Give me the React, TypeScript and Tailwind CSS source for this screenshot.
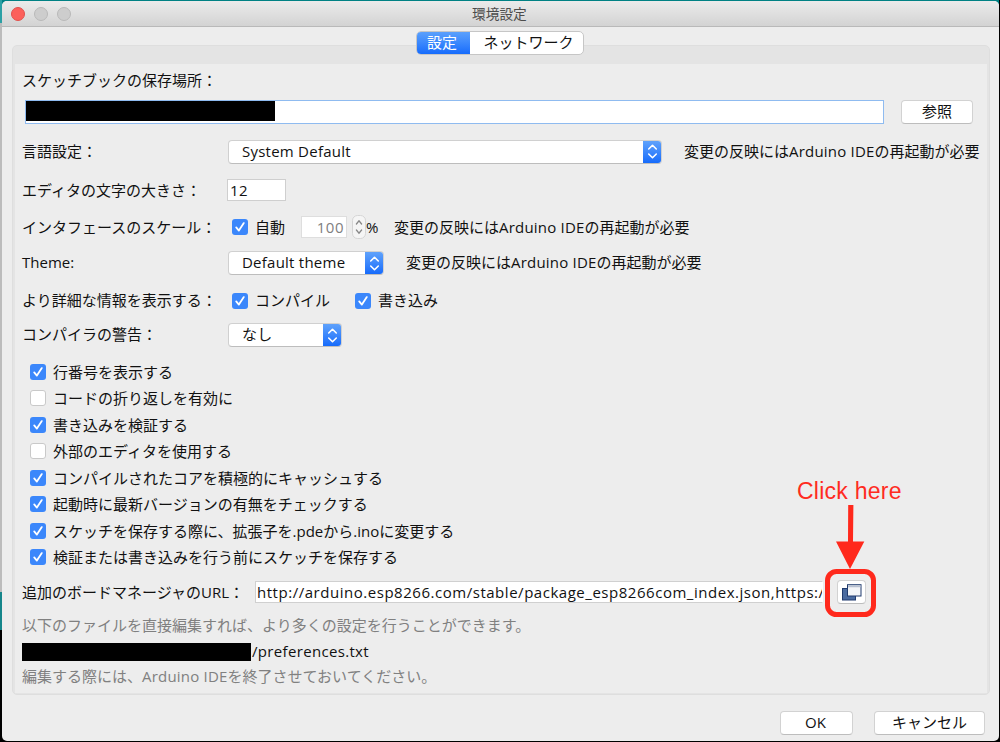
import React from "react";

const NOTE = "変更の反映にはArduino IDEの再起動が必要";

function Text({ children, className = "" }: { children: React.ReactNode; className?: string }) {
  return <span className={`shrink-0 whitespace-nowrap leading-5 ${className}`}>{children}</span>;
}

function Row({ children, className }: { children: React.ReactNode; className: string }) {
  return <div className={`flex shrink-0 items-center ${className}`}>{children}</div>;
}

function Note({ className }: { className: string }) {
  return (
    <Text className={className}>
      {NOTE.slice(0, 7)}
      <span className="tracking-[0.2px]">{NOTE.slice(7, 18)}</span>
      {NOTE.slice(18)}
    </Text>
  );
}

function Check({ on }: { on: boolean }) {
  return on ? (
    <svg className="h-4 w-4 shrink-0" viewBox="0 0 16 16">
      <rect width="16" height="16" rx="3" fill="#3b87fb" />
      <path d="M4.2 8.4 6.9 11.6 11.8 4.1" fill="none" stroke="white" strokeWidth="1.8" strokeLinecap="round" strokeLinejoin="round" />
    </svg>
  ) : (
    <span className="h-4 w-4 shrink-0 rounded-[3px] border border-[#c9c9c9] bg-white" />
  );
}

function Select({ label, className }: { label: string; className: string }) {
  return (
    <div className={`flex h-6 shrink-0 overflow-hidden rounded border border-[#d0d0d0] border-b-[#bdbdbd] bg-white ${className}`}>
      <div className="flex flex-1 items-center pl-[13px]">
        <Text className="mb-[2px] tracking-[0.24px]">{label}</Text>
      </div>
      <div className="-my-px -mr-px flex w-[19px] items-center justify-center bg-linear-to-b from-[#62a4fb] to-[#1068fb]">
        <svg width="11" height="17" viewBox="0 0 11 17" fill="none" stroke="white" strokeWidth="1.6" strokeLinecap="round" strokeLinejoin="round">
          <path d="M1.7 6 5.5 2.3 9.3 6M1.7 11 5.5 14.7 9.3 11" />
        </svg>
      </div>
    </div>
  );
}

function Button({ children, className }: { children: React.ReactNode; className: string }) {
  return (
    <button className={`flex h-6 shrink-0 items-center justify-center rounded border border-[#d2d2d2] border-b-[#bdbdbd] bg-white ${className}`}>
      {children}
    </button>
  );
}

const OPTIONS: [string, boolean][] = [
  ["行番号を表示する", true],
  ["コードの折り返しを有効に", false],
  ["書き込みを検証する", true],
  ["外部のエディタを使用する", false],
  ["コンパイルされたコアを積極的にキャッシュする", true],
  ["起動時に最新バージョンの有無をチェックする", true],
  ["スケッチを保存する際に、拡張子を.pdeから.inoに変更する", true],
  ["検証または書き込みを行う前にスケッチを保存する", true],
];

export default function App() {
  return (
    <div className="relative flex h-[742px] w-[1000px] overflow-hidden bg-black font-['Open_Sans','Noto_Sans_CJK_JP',sans-serif] text-[15px] text-[#111]">
      <div className="flex w-[2px] shrink-0 flex-col">
        <div className="h-[23px] bg-[#2ba0a5]" />
        <div className="h-[569px] bg-[#bcbcbc]" />
        <div className="h-[38px] bg-[#16868b]" />
      </div>
      <div className="flex h-[741px] w-[997px] shrink-0 flex-col bg-linear-to-b from-[#008184] from-50% to-black to-50%">
        <div className="mt-px flex h-[740px] flex-col overflow-hidden rounded-[5px] bg-[#ededed]">
          <header className="flex h-[26px] shrink-0 items-center border-b border-[#b9b9b9] bg-linear-to-b from-[#ebebeb] to-[#d3d3d3] pl-[9px]">
            <div className="flex gap-[9px]">
              <span className="h-[14px] w-[14px] rounded-full border border-[#e2504c] bg-[#fc605b]" />
              <span className="h-[14px] w-[14px] rounded-full border border-[#b9b9b9] bg-[#cdcdcd]" />
              <span className="h-[14px] w-[14px] rounded-full border border-[#b9b9b9] bg-[#cdcdcd]" />
            </div>
            <Text className="ml-[401px] text-[13.7px] text-[#4c4c4c]">環境設定</Text>
          </header>

          <div className="z-10 ml-[414px] mt-[4px] flex h-6 w-[168px] shrink-0 overflow-hidden rounded-[5px] border border-[#c6c6c6] bg-white">
            <div className="-my-px -ml-px flex w-[54px] items-center justify-center bg-linear-to-b from-[#5da2fc] to-[#1169fc] pr-[2px] text-white">
              <Text className="mb-[2px]">設定</Text>
            </div>
            <div className="flex flex-1 items-center justify-center pl-[4px]">
              <Text className="mb-[2px]">ネットワーク</Text>
            </div>
          </div>

          <main className="-mt-[10px] ml-[10px] flex h-[650px] w-[978px] shrink-0 flex-col rounded-[5px] border border-[#dedede] bg-[#e4e4e4] px-[2px] pb-[1px] pt-[18px]">
            <div className="flex flex-1 flex-col bg-[#ededed] pl-[7px]">
              <Row className="h-[32px]"><Text>スケッチブックの保存場所：</Text></Row>
              <Row className="h-[31px] pl-[3px]">
                <div className="h-[24px] w-[859px] border border-[#8fbbf0] bg-white">
                  <div className="h-[20px] w-[249px] bg-black" />
                </div>
                <Button className="ml-[17px] w-[72px]"><Text className="mb-[2px]">参照</Text></Button>
              </Row>
              <Row className="h-[49px]">
                <Text className="mb-[2px] w-[206px]">言語設定：</Text>
                <Select label="System Default" className="w-[434px]" />
                <Note className="mb-[2px] ml-[22px]" />
              </Row>
              <Row className="h-[28px]">
                <Text className="w-[205px]">エディタの文字の大きさ：</Text>
                <div className="flex h-[22px] w-[59px] items-center border border-[#cfcfcf] bg-white pl-[2px]"><Text className="mb-px tracking-[0.3px]">12</Text></div>
              </Row>
              <Row className="h-[46px]">
                <Text className="w-[210px]">インタフェースのスケール：</Text>
                <Check on />
                <Text className="ml-[7px] w-[46px]">自動</Text>
                <div className="flex h-[22px] w-[46px] items-center justify-end border border-[#dedede] bg-white pr-[2px] text-[#808080]"><Text className="mb-px tracking-[0.5px]">100</Text></div>
                <svg className="ml-[5px] shrink-0" width="14" height="24" viewBox="0 0 14 24" fill="none">
                  <rect x=".5" y=".5" width="13" height="23" rx="5" fill="#f5f5f5" stroke="#d5d5d5" />
                  <path d="M4.4 9 7 5.8 9.6 9M4.4 15 7 18.2 9.6 15" stroke="#888" strokeWidth="1.3" strokeLinecap="round" />
                </svg>
                <Text className="w-[28px]">%</Text>
                <Note className="" />
              </Row>
              <Row className="h-[26px]">
                <Text className="mb-[2px] w-[206px]">Theme:</Text>
                <Select label="Default theme" className="w-[156px]" />
                <Note className="mb-[2px] ml-[22px]" />
              </Row>
              <Row className="h-[49px]">
                <Text className="mb-[2px] w-[210px]">より詳細な情報を表示する：</Text>
                <Check on />
                <Text className="mb-[2px] ml-[7px] w-[100px]">コンパイル</Text>
                <Check on />
                <Text className="mb-[2px] ml-[7px]">書き込み</Text>
              </Row>
              <Row className="h-[20px]">
                <Text className="mb-[2px] w-[206px]">コンパイラの警告：</Text>
                <Select label="なし" className="w-[114px]" />
              </Row>
              <div className="mt-[13.5px] flex flex-col">
                {OPTIONS.map(([label, on]) => (
                  <Row key={label} className="h-[26.5px] pl-[8px]">
                    <Check on={on} />
                    <Text className="ml-[7px]">{label}</Text>
                  </Row>
                ))}
              </div>
              <Row className="h-[43.5px]">
                <Text className="w-[233px]">追加のボードマネージャのURL：</Text>
                <div className="flex h-[22px] w-[568px] items-center overflow-hidden border border-[#d0d0d0] border-r-white bg-white pl-px">
                  <Text className="mb-px tracking-[0.53px]">http://arduino.esp8266.com/stable/package_esp8266com_index.json,https:/</Text>
                </div>
                <Button className="ml-[14px] w-[29px]">
                  <svg className="shrink-0" width="20" height="17" viewBox="0 0 20 17">
                    <rect x=".5" y="4.5" width="13" height="11.5" fill="#4a6ba0" stroke="#203b6e" />
                    <rect x="5.5" y=".7" width="13.5" height="11.3" fill="#f3f5f8" stroke="#203b6e" />
                    <path d="M6 2.3h12.5" stroke="#b7c0d0" strokeWidth="2" />
                  </svg>
                </Button>
              </Row>
              <Row className="h-[23.5px] text-[#808080]"><Text className="mb-[2px]">以下のファイルを直接編集すれば、より多くの設定を行うことができます。</Text></Row>
              <Row className="h-[28px]">
                <div className="h-[18px] w-[229px] bg-black" />
                <Text className="mb-[2px] ml-px tracking-[0.33px]">/preferences.txt</Text>
              </Row>
              <Row className="h-[21px] text-[#808080]"><Text>編集する際には、<span className="tracking-[0.2px]">Arduino IDE</span>を終了させておいてください。</Text></Row>
            </div>
          </main>

          <footer className="mt-[16px] flex shrink-0 justify-end gap-[21px] pr-[14px]">
            <Button className="w-[73px]"><Text className="mb-[2px] pr-[2px]">OK</Text></Button>
            <Button className="w-[111px]"><Text className="mb-[2px]">キャンセル</Text></Button>
          </footer>
        </div>
      </div>

      <div className="absolute left-[797px] top-[476px] whitespace-nowrap font-['Liberation_Sans',sans-serif] text-[23px] leading-[30px] tracking-[0.25px] text-[#ff2b1f]">Click here</div>
      <svg className="absolute left-[824px] top-[504px]" width="54" height="115" viewBox="0 0 54 115">
        <path d="M24.2 1h5.2l-.4 36.5h11.3L26 65 12 37.500h12z" fill="#ff291c" />
        <rect x="3.500" y="67.500" width="46" height="43" rx="9" fill="none" stroke="#ff291c" strokeWidth="5" />
      </svg>
    </div>
  );
}
